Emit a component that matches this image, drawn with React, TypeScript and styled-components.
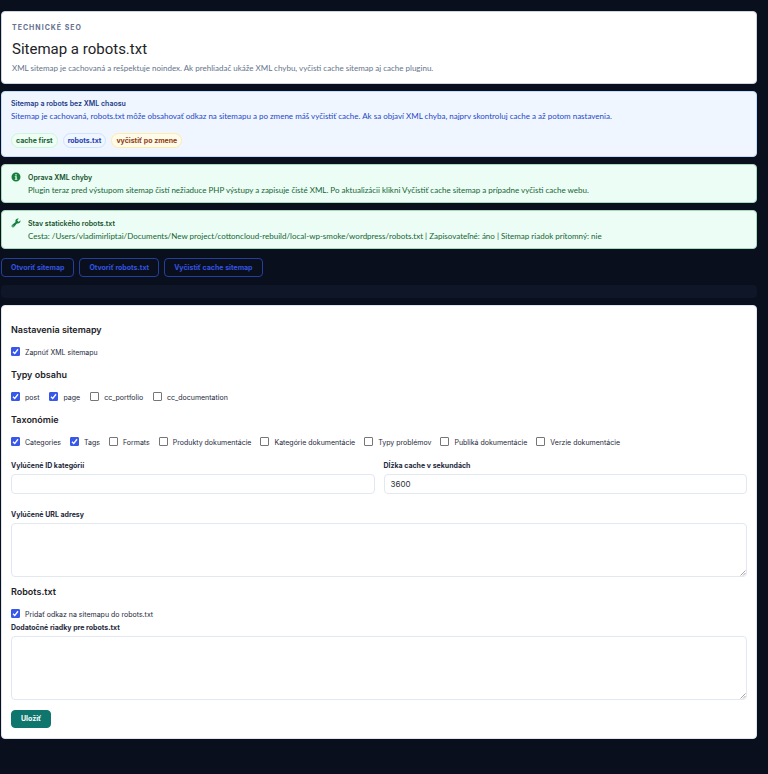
import React from "react";
import styled, { createGlobalStyle } from "styled-components";

const GlobalStyle = createGlobalStyle`
  *, *::before, *::after { box-sizing: border-box; }
  html { background: #090f1d; }
  body {
    margin: 0;
    background: #090f1d;
    color: #1e293b;
    font-family: Inter, "Liberation Sans", sans-serif;
    font-size: 8px;
    line-height: 12px;
  }
  h1, h2, p { margin: 0; }
  button, input, textarea { font-family: inherit; }
`;

const Page = styled.main`
  display: flex;
  flex-direction: column;
  gap: 7px;
  padding: 11px 11px 32px 1px;
`;

const Hero = styled.header`
  padding: 10px 10px 9px;
  background: #fff;
  border: 1px solid #cbd5e1;
  border-radius: 4px;
`;

const Eyebrow = styled.p`
  font-size: 7px;
  font-weight: 700;
  letter-spacing: 1px;
  text-transform: uppercase;
  color: #64708f;
`;

const Title = styled.h1`
  margin-top: 5px;
  font-family: Roboto, Inter, sans-serif;
  font-size: 15px;
  font-weight: 400;
  line-height: 20px;
  color: #1d2327;
`;

const BodyText = styled.p`
  font-family: Lato, Inter, sans-serif;
  font-size: 8px;
`;

const Lead = styled(BodyText)`
  margin-top: 3px;
  color: #64748b;
`;

const Guide = styled.section`
  padding: 6px 9px 8px;
  background: #eff6ff;
  border: 1px solid #bfdbfe;
  border-radius: 4px;
  color: #1e48c8;
`;

const PanelTitle = styled.h2<{ $color: string }>`
  font-size: 7px;
  font-weight: 600;
  line-height: 12px;
  color: ${(p) => p.$color};
`;

const Tags = styled.div`
  display: flex;
  flex-wrap: wrap;
  gap: 5px;
  margin-top: 11px;
`;

const tagTones = {
  green: { background: "#f0fdf4", border: "#ccf7db", color: "#166534" },
  blue: { background: "#eff6ff", border: "#cfe3fd", color: "#1e40af" },
  amber: { background: "#fffbeb", border: "#fdecae", color: "#92400e" },
};

const Tag = styled.span<{ $tone: keyof typeof tagTones }>`
  padding: 1px 4px;
  border: 1px solid ${(p) => tagTones[p.$tone].border};
  border-radius: 8px;
  background: ${(p) => tagTones[p.$tone].background};
  color: ${(p) => tagTones[p.$tone].color};
  font-size: 7px;
  font-weight: 700;
  line-height: 11px;
`;

const Notice = styled.section`
  display: flex;
  gap: 7px;
  padding: 7px 9px 6px;
  background: #ecfdf5;
  border: 1px solid #a7d9bb;
  border-radius: 4px;
  color: #166534;
`;

const NoticeIcon = styled.svg`
  flex: none;
  width: 10px;
  height: 10px;
  fill: #15803d;
`;

const Actions = styled.nav`
  display: flex;
  flex-wrap: wrap;
  gap: 5px;
  margin: 2px 0 1px;
`;

const ActionLink = styled.a`
  padding: 3px 9px;
  border: 1px solid #24409f;
  border-radius: 4px;
  color: #3454e0;
  font-size: 7px;
  font-weight: 700;
  line-height: 11px;
  text-decoration: none;
`;

const EmptyBar = styled.div`
  height: 13px;
  border-radius: 4px;
  background: #0e1627;
`;

const Form = styled.form`
  padding: 17px 9px 10px;
  background: #fff;
  border: 1px solid #dfe5ee;
  border-radius: 4px;
`;

const SectionTitle = styled.h2`
  font-size: 9px;
  font-weight: 600;
  line-height: 14px;
  color: #1d2327;
`;

const Checks = styled.div<{ $gap: number }>`
  display: flex;
  flex-wrap: wrap;
  gap: ${(p) => p.$gap}px;
  padding: 10px 0 9px;
`;

const CheckLabel = styled.label`
  display: flex;
  align-items: flex-start;
  gap: 5px;
  font-size: 7px;
  line-height: 12px;
  color: #1e293b;
`;

const CheckBox = styled.input`
  appearance: none;
  width: 9px;
  height: 9px;
  margin: 0;
  border: 1px solid #767676;
  border-radius: 1px;
  background: #fff;

  &:checked {
    border-color: #3858e9;
    background: #3858e9 center / 7px 7px no-repeat
      url("data:image/svg+xml,%3Csvg xmlns='http://www.w3.org/2000/svg' viewBox='0 0 14 14'%3E%3Cpath d='M2 7.500 5.500 11 12 2.500' fill='none' stroke='white' stroke-width='2.600'/%3E%3C/svg%3E");
  }
`;

const Columns = styled.div`
  display: grid;
  grid-template-columns: 1fr 1fr;
  gap: 9px;
  margin: 2px 0 15px;
`;

const FieldLabel = styled.label`
  display: block;
  margin-bottom: 2px;
  font-size: 7px;
  font-weight: 700;
  line-height: 12px;
  color: #1e293b;
`;

const TextInput = styled.input`
  display: block;
  width: 100%;
  height: 20px;
  padding: 0 6px;
  border: 1px solid #e2e8f0;
  border-radius: 4px;
  background: #fff;
  color: #2c3338;
  font-size: 8px;
`;

const TextArea = styled.textarea<{ $tall?: boolean }>`
  display: block;
  width: 100%;
  height: ${(p) => (p.$tall ? 64 : 54)}px;
  padding: 4px 6px;
  border: 1px solid #e2e8f0;
  border-radius: 4px;
  background: #fff;
  font-size: 8px;
  resize: vertical;

  &::-webkit-resizer {
    background: right bottom / 6px 6px no-repeat
      url("data:image/svg+xml,%3Csvg xmlns='http://www.w3.org/2000/svg' viewBox='0 0 12 12'%3E%3Cpath d='M1 11 11 1M6 11l5-5' stroke='%23888' stroke-width='1.500'/%3E%3C/svg%3E");
  }
`;

const SaveButton = styled.button`
  margin-top: 10px;
  padding: 3px 9px;
  border: 1px solid #0f766e;
  border-radius: 4px;
  background: #0f766e;
  color: #fff;
  font-size: 7px;
  font-weight: 700;
  line-height: 10px;
`;

const RobotsTitle = styled(SectionTitle)`
  margin-top: 8px;
`;

const RobotsCheck = styled.div`
  padding: 10px 0 1px;
`;

const InfoIcon = () => (
  <NoticeIcon viewBox="0 0 20 20" aria-hidden="true">
    <path
      fillRule="evenodd"
      d="M10 1a9 9 0 1 0 0 18 9 9 0 0 0 0-18Zm-1.500 3.500h3v2.700h-3V4.500ZM7.500 8.500h4v5.500h1.200v1.700H7.500V14h1.200v-3.800H7.500V8.500Z"
    />
  </NoticeIcon>
);

const ToolIcon = () => (
  <NoticeIcon viewBox="1 1 18 18" aria-hidden="true">
    <path d="M16.680 9.770c-1.340 1.340-3.300 1.670-4.950.99l-5.410 6.520c-.99.990-2.590.990-3.580 0s-.99-2.590 0-3.570l6.520-5.420c-.68-1.650-.35-3.610.99-4.950 1.280-1.280 3.120-1.620 4.720-1.060l-2.890 2.890 2.820 2.820 2.860-2.870c.53 1.580.18 3.390-1.080 4.650ZM3.810 16.210c.4.390 1.040.390 1.430 0 .4-.4.400-1.040 0-1.430-.39-.4-1.030-.4-1.430 0-.39.390-.39 1.030 0 1.430Z" />
  </NoticeIcon>
);

type Option = { label: string; checked?: boolean };

const contentTypes: Option[] = [
  { label: "post", checked: true },
  { label: "page", checked: true },
  { label: "cc_portfolio" },
  { label: "cc_documentation" },
];

const taxonomies: Option[] = [
  { label: "Categories", checked: true },
  { label: "Tags", checked: true },
  { label: "Formats" },
  { label: "Produkty dokumentácie" },
  { label: "Kategórie dokumentácie" },
  { label: "Typy problémov" },
  { label: "Publiká dokumentácie" },
  { label: "Verzie dokumentácie" },
];

const CheckGroup = ({ options, gap = 9 }: { options: Option[]; gap?: number }) => (
  <Checks $gap={gap}>
    {options.map((o) => (
      <CheckLabel key={o.label}>
        <CheckBox type="checkbox" defaultChecked={o.checked} />
        {o.label}
      </CheckLabel>
    ))}
  </Checks>
);

export default function App() {
  return (
    <>
      <GlobalStyle />
      <Page>
        <Hero>
          <Eyebrow>Technické SEO</Eyebrow>
          <Title>Sitemap a robots.txt</Title>
          <Lead>
            XML sitemap je cachovaná a rešpektuje noindex. Ak prehliadač ukáže XML chybu, vyčisti
            cache sitemap aj cache pluginu.
          </Lead>
        </Hero>

        <Guide>
          <PanelTitle $color="#1e3a8a">Sitemap a robots bez XML chaosu</PanelTitle>
          <BodyText>
            Sitemap je cachovaná, robots.txt môže obsahovať odkaz na sitemapu a po zmene máš
            vyčistiť cache. Ak sa objaví XML chyba, najprv skontroluj cache a až potom nastavenia.
          </BodyText>
          <Tags>
            <Tag $tone="green">cache first</Tag>
            <Tag $tone="blue">robots.txt</Tag>
            <Tag $tone="amber">vyčistiť po zmene</Tag>
          </Tags>
        </Guide>

        <Notice>
          <InfoIcon />
          <div>
            <PanelTitle $color="#14532d">Oprava XML chyby</PanelTitle>
            <BodyText>
              Plugin teraz pred výstupom sitemap čistí nežiaduce PHP výstupy a zapisuje čisté XML.
              Po aktualizácii klikni Vyčistiť cache sitemap a prípadne vyčisti cache webu.
            </BodyText>
          </div>
        </Notice>

        <Notice>
          <ToolIcon />
          <div>
            <PanelTitle $color="#14532d">Stav statického robots.txt</PanelTitle>
            <BodyText>
              Cesta: /Users/vladimirliptai/Documents/New
              project/cottoncloud-rebuild/local-wp-smoke/wordpress/robots.txt | Zapisovateľné: áno |
              Sitemap riadok prítomný: nie
            </BodyText>
          </div>
        </Notice>

        <Actions>
          <ActionLink href="#sitemap">Otvoriť sitemap</ActionLink>
          <ActionLink href="#robots">Otvoriť robots.txt</ActionLink>
          <ActionLink href="#cache">Vyčistiť cache sitemap</ActionLink>
        </Actions>

        <EmptyBar />

        <Form onSubmit={(e) => e.preventDefault()}>
          <SectionTitle>Nastavenia sitemapy</SectionTitle>
          <CheckGroup options={[{ label: "Zapnúť XML sitemapu", checked: true }]} />
          <SectionTitle>Typy obsahu</SectionTitle>
          <CheckGroup options={contentTypes} gap={10} />
          <SectionTitle>Taxonómie</SectionTitle>
          <CheckGroup options={taxonomies} />

          <Columns>
            <div>
              <FieldLabel htmlFor="excluded-ids">Vylúčené ID kategórií</FieldLabel>
              <TextInput id="excluded-ids" type="text" />
            </div>
            <div>
              <FieldLabel htmlFor="cache-ttl">Dĺžka cache v sekundách</FieldLabel>
              <TextInput id="cache-ttl" type="text" inputMode="numeric" defaultValue="3600" />
            </div>
          </Columns>

          <FieldLabel htmlFor="excluded-urls">Vylúčené URL adresy</FieldLabel>
          <TextArea id="excluded-urls" />

          <RobotsTitle>Robots.txt</RobotsTitle>
          <RobotsCheck>
            <CheckLabel>
              <CheckBox type="checkbox" defaultChecked />
              Pridať odkaz na sitemapu do robots.txt
            </CheckLabel>
          </RobotsCheck>
          <FieldLabel htmlFor="extra-lines">Dodatočné riadky pre robots.txt</FieldLabel>
          <TextArea id="extra-lines" $tall />

          <SaveButton type="submit">Uložiť</SaveButton>
        </Form>
      </Page>
    </>
  );
}
